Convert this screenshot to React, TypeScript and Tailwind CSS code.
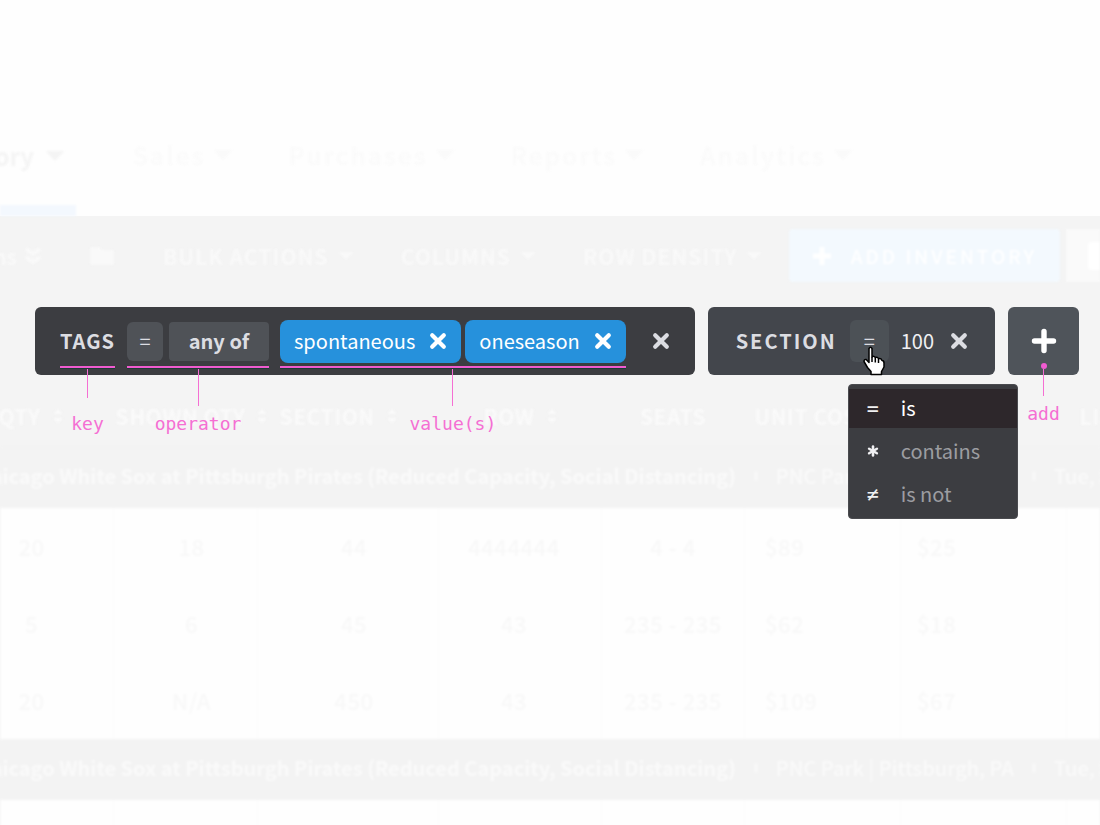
import React, { useState } from 'react';
import { Asterisk } from 'lucide-react';

interface Operator {
  symbol: React.ReactNode;
  label: string;
}

interface Listing {
  qty: string;
  shown: string;
  section: string;
  row: string;
  seats: string;
  cost: string;
  price: string;
}

const NAV_ITEMS = ['Sales', 'Purchases', 'Reports', 'Analytics'];
const TOOLBAR_MENUS = ['BULK ACTIONS', 'COLUMNS', 'ROW DENSITY'];
const TAGS = ['spontaneous', 'oneseason'];

const OPERATORS: Operator[] = [
  { symbol: '=', label: 'is' },
  { symbol: <Asterisk className="-mx-[3px] size-[18px]" strokeWidth={3.4} />, label: 'contains' },
  { symbol: '≠', label: 'is not' },
];

const LISTINGS: Listing[] = [
  { qty: '20', shown: '18', section: '44', row: '4444444', seats: '4 - 4', cost: '$89', price: '$25' },
  { qty: '5', shown: '6', section: '45', row: '43', seats: '235 - 235', cost: '$62', price: '$18' },
  { qty: '20', shown: 'N/A', section: '450', row: '43', seats: '235 - 235', cost: '$109', price: '$67' },
];

const Caret: React.FC<{ small?: boolean }> = ({ small }) => (
  <svg className={small ? 'w-[14px] h-[8px] shrink-0' : 'w-[18px] h-[10px] shrink-0'} viewBox="0 0 18 10" fill="currentColor" aria-hidden="true">
    <path d="M1 0h16q1 0 .4 1L10 9q-1 1-2 0L.6 1Q0 0 1 0z" />
  </svg>
);

const SortIcon: React.FC = () => (
  <svg className="w-[10px] h-[14px] shrink-0" viewBox="0 0 10 14" fill="currentColor" aria-hidden="true">
    <path d="M5 0l5 5H0zM5 14l5-5H0z" />
  </svg>
);

const CloseIcon: React.FC = () => (
  <svg className="w-[18px] h-[18px]" viewBox="0 0 18 18" fill="none" stroke="currentColor" strokeWidth="4.2" strokeLinecap="round" aria-hidden="true">
    <path d="M3.2 3.2l11.6 11.6M14.8 3.2L3.2 14.8" />
  </svg>
);

const HandCursor: React.FC = () => (
  <svg className="w-[22px] h-[30px]" viewBox="0 0 22 30" fill="#fff" stroke="#000" strokeWidth="1.5" strokeLinejoin="round" aria-hidden="true">
    <path d="M6 2.5Q7.5 0 9 2.5V11Q11 9.5 12.3 11.5Q14.5 10.5 15.5 12.7Q18 12 19 14.5Q21 14.5 21 17V21L18.5 25.5V28.5H8V25.5L4.5 21.5L1 15.5Q1 13 3.2 13.5L6 16.5z" />
    <path d="M9 11v5M12.3 11.5v5M15.5 12.7v4.3" fill="none" />
  </svg>
);

// Underline, stem and caption hanging below one part of a filter
const Note: React.FC<{ label: string; long?: boolean }> = ({ label, long }) => (
  <div className="absolute inset-x-0 top-[59px] flex flex-col items-center pointer-events-none font-normal tracking-normal text-[#f56fd3]">
    <span className="w-full h-[3px] bg-[#f05bd0] border-b border-[#1d3a35]" />
    <span className={long ? 'w-px h-[37px] bg-current' : 'w-px h-[29px] bg-current'} />
    <span className={`${long ? 'mt-2' : 'mt-4'} font-['DejaVu_Sans_Mono',monospace] text-[18px] leading-5 whitespace-nowrap`}>
      {label}
    </span>
  </div>
);

const Th: React.FC<{ children?: React.ReactNode; className?: string; sort?: boolean }> = ({ children, className = 'justify-center', sort }) => (
  <th scope="col" className="p-0 font-bold">
    <div className={`flex items-center gap-3 whitespace-nowrap ${className}`}>
      {children}
      {sort && <SortIcon />}
    </div>
  </th>
);

const GroupRow: React.FC = () => (
  <tr className="h-[61px] bg-[#f3f3f3] text-[20px] text-[#fafafa]">
    <td colSpan={8} className="p-0 pb-1">
      <div className="-ml-6 flex items-center gap-[18px] whitespace-nowrap">
        <b>Chicago White Sox at Pittsburgh Pirates (Reduced Capacity, Social Distancing)</b>
        <span className="size-[10px] rounded-full border-2 border-[#f7f7f7]" />
        <span className="font-medium">PNC Park | Pittsburgh, PA</span>
        <span className="size-[10px] rounded-full border-2 border-[#f7f7f7]" />
        <span className="font-medium">Tue, Sep 7</span>
      </div>
    </td>
  </tr>
);

export default function App() {
  const [operator, setOperator] = useState<Operator>(OPERATORS[0]);

  return (
    <div className="min-h-screen overflow-hidden bg-[#fefefe] font-['Noto_Sans_CJK_SC',sans-serif] leading-6">
      <header className="pt-[98px]">
        <nav className="flex h-[118px] gap-[57px] text-[24px] text-[#fafafa] blur-[1px]">
          <a href="#inventory" className="flex w-[76px] shrink-0 items-center justify-end gap-3 border-b-[11px] border-[#f3f8fe] pt-2 pr-3 font-bold text-[#f4f4f4]">
            Inventory <Caret />
          </a>
          {NAV_ITEMS.map((item) => (
            <a key={item} href={`#${item.toLowerCase()}`} className="flex items-center gap-2 pb-1 font-medium tracking-widest">
              {item} <Caret />
            </a>
          ))}
        </nav>
      </header>

      <main className="bg-[#f4f4f4]">
        <div className="flex h-[91px] items-start gap-12 pt-[13px] text-[21px] font-bold text-[#f9f9f9] blur-[1px]">
          <button type="button" className="flex h-[53px] w-[41px] shrink-0 items-center justify-end gap-2">
            Actions
            <svg className="h-[18px] w-[16px] shrink-0" viewBox="0 0 16 18" fill="none" stroke="currentColor" strokeWidth="4" aria-hidden="true">
              <path d="M1 2l7 5 7-5M1 10l7 5 7-5" />
            </svg>
          </button>
          <button type="button" aria-label="Folder" className="flex h-[53px] items-center">
            <svg className="h-[20px] w-[26px]" viewBox="0 0 24 20" fill="currentColor" aria-hidden="true">
              <path d="M2 1h7l3 3h10q2 0 2 2v11q0 2-2 2H2q-2 0-2-2V3q0-2 2-2z" />
            </svg>
          </button>
          {TOOLBAR_MENUS.map((menu) => (
            <button key={menu} type="button" className="flex h-[53px] items-center gap-[10px] tracking-wider whitespace-nowrap">
              {menu} <Caret small />
            </button>
          ))}
          <div className="-ml-5 flex flex-1 gap-[6px]">
            <button type="button" className="flex h-[53px] w-[271px] shrink-0 items-center justify-center gap-5 rounded bg-[#f3f9fe] text-[19px] font-medium tracking-[3px] text-white">
              <svg className="size-[18px]" viewBox="0 0 18 18" stroke="currentColor" strokeWidth="5" aria-hidden="true">
                <path d="M9 0v18M0 9h18" />
              </svg>
              ADD INVENTORY
            </button>
            <button type="button" aria-label="Export" className="flex h-[53px] flex-1 items-center bg-[#fafafa] pl-[22px]">
              <span className="h-7 w-full rounded-l bg-white" />
            </button>
          </div>
        </div>

        <section aria-label="Filters" className="relative z-10 flex h-[78px] items-start gap-[13px] pr-[21px] pl-[35px] text-[20px]">
          <div className="flex h-[68px] flex-1 items-center rounded-md bg-[#3c3d41] pr-[25px] pl-[25px] text-[#dcdde2]">
            <div className="relative mr-3 flex h-full items-center font-bold tracking-wider">
              TAGS
              <Note label="key" />
            </div>
            <div className="relative mr-[11px] flex h-full items-center gap-[6px]">
              <button type="button" className="h-[39px] w-[36px] rounded-md bg-[#4f5257]">=</button>
              <button type="button" className="h-[39px] w-[100px] rounded-sm bg-[#4f5257] font-bold">any of</button>
              <Note label="operator" long />
            </div>
            <div className="relative flex h-full items-center gap-1 text-white">
              {TAGS.map((tag) => (
                <span key={tag} className="flex h-[43px] items-center gap-[14px] rounded-lg bg-[#2691dc] px-[14px]">
                  {tag}
                  <button type="button" aria-label={`Remove ${tag}`}><CloseIcon /></button>
                </span>
              ))}
              <Note label="value(s)" long />
            </div>
            <button type="button" aria-label="Remove tags filter" className="ml-auto"><CloseIcon /></button>
          </div>

          <div className="flex h-[68px] items-center rounded-md bg-[#43464c] pr-[27px] pl-[28px] text-[#dcdde2]">
            <span className="mr-[13px] font-bold tracking-widest">SECTION</span>
            <div className="relative mr-3">
              <button type="button" aria-haspopup="listbox" aria-expanded="true" className="h-[42px] w-[39px] rounded-md bg-[#4c5156]">
                {operator.symbol}
              </button>
              <div className="pointer-events-none absolute top-[26px] left-[13px] z-20"><HandCursor /></div>
              <div role="listbox" aria-label="Operator" className="absolute top-[64px] -left-[2px] z-10 flex w-[170px] flex-col gap-1 rounded-sm border border-[#4a4b4f] bg-[#3c3d41] py-1">
                {OPERATORS.map((op) => (
                  <button
                    key={op.label}
                    type="button"
                    role="option"
                    aria-selected={op.label === operator.label}
                    onClick={() => setOperator(op)}
                    className={`flex h-[39px] items-center pb-[2px] pl-[18px] text-left ${
                      op.label === operator.label ? 'bg-[#2d272b] text-white' : 'text-[#9c9da1]'
                    }`}
                  >
                    <span className="w-[34px] font-['DejaVu_Sans_Mono',monospace] text-[20px] text-[#f0f0f2]">{op.symbol}</span>
                    {op.label}
                  </button>
                ))}
              </div>
            </div>
            <span className="mr-4 text-[#f0f0f3]">100</span>
            <button type="button" aria-label="Remove section filter"><CloseIcon /></button>
          </div>

          <div className="relative">
            <button type="button" aria-label="Add filter" className="flex h-[68px] w-[71px] items-center justify-center rounded-md bg-[#4f545a] text-white">
              <svg className="size-[26px]" viewBox="0 0 26 26" stroke="currentColor" strokeWidth="5.4" strokeLinecap="round" aria-hidden="true">
                <path d="M13 3.5v19M3.5 13h19" />
              </svg>
            </button>
            <div className="pointer-events-none absolute inset-x-0 top-[56px] flex flex-col items-center text-[#f56fd3]">
              <span className="size-[6px] rounded-full bg-[#f05bd0]" />
              <span className="h-[27px] w-px bg-current" />
              <span className="mt-2 font-['DejaVu_Sans_Mono',monospace] text-[18px] leading-5">add</span>
            </div>
          </div>
        </section>

        <table className="w-full table-fixed text-center text-[22px] blur-[1px]">
          <colgroup>
            <col className="w-[113px]" />
            <col className="w-[144px]" />
            <col className="w-[181px]" />
            <col className="w-[163px]" />
            <col className="w-[143px]" />
            <col className="w-[156px]" />
            <col className="w-[166px]" />
            <col />
          </colgroup>
          <thead>
            <tr className="h-[62px] text-[21px] tracking-wide text-[#fafafa]">
              <Th className="justify-end pr-[51px]" sort>QTY</Th>
              <Th className="justify-center pl-3" sort>SHOWN QTY</Th>
              <Th className="pl-[22px]" sort>SECTION</Th>
              <Th sort>ROW</Th>
              <Th>SEATS</Th>
              <Th className="pl-[10px]">UNIT COST</Th>
              <Th />
              <Th className="pl-[13px]">LIST PRICE</Th>
            </tr>
          </thead>
          <tbody>
            <GroupRow />
            {LISTINGS.map((item, index) => (
              <tr key={index} className="h-[77px] bg-[#fefefe] font-medium tracking-wide text-[#f8f8f8] *:border-l *:border-[#fbfbfb] *:pb-[2px]">
                <td className="pr-[51px] pl-0">{item.qty}</td>
                <td className="pl-3">{item.shown}</td>
                <td className="pl-3">{item.section}</td>
                <td className="pr-3">{item.row}</td>
                <td>{item.seats}</td>
                <td className="pl-5 text-left">{item.cost}</td>
                <td className="pl-4 text-left">{item.price}</td>
                <td />
              </tr>
            ))}
            <GroupRow />
            <tr className="h-7 bg-[#fefefe] *:border-l *:border-[#fbfbfb]">
              <td /><td /><td /><td /><td /><td /><td /><td />
            </tr>
          </tbody>
        </table>
      </main>
    </div>
  );
}
